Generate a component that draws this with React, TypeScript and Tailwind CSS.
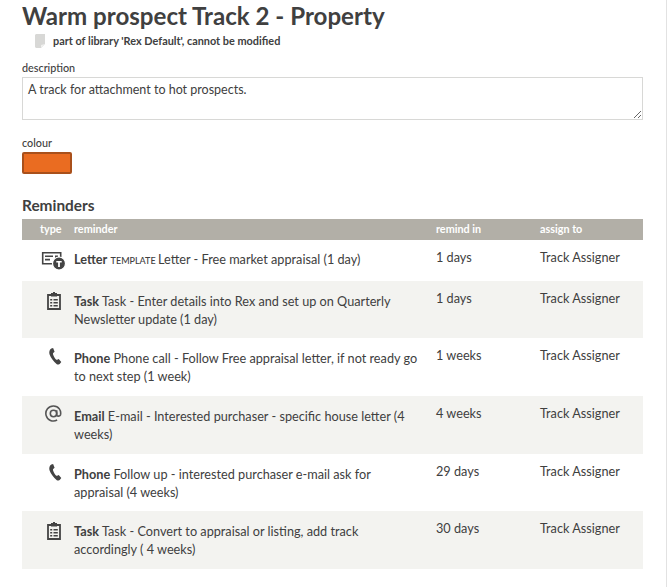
const rows = [
  { icon: "letter", type: "Letter", tpl: true, text: "Letter - Free market appraisal (1 day)", when: "1 days", h: "h-[41px]", pt: "pt-[10px]", alt: false },
  { icon: "task", type: "Task", text: "Task - Enter details into Rex and set up on Quarterly Newsletter update (1 day)", when: "1 days", h: "h-[57px]", pt: "pt-[11px]", alt: true },
  { icon: "phone", type: "Phone", text: "Phone call - Follow Free appraisal letter, if not ready go to next step (1 week)", when: "1 weeks", h: "h-[58px]", pt: "pt-[11px]", alt: false },
  { icon: "email", type: "Email", text: "E-mail - Interested purchaser - specific house letter (4 weeks)", when: "4 weeks", h: "h-[58px]", pt: "pt-[11px]", alt: true },
  { icon: "phone", type: "Phone", text: "Follow up - interested purchaser e-mail ask for appraisal (4 weeks)", when: "29 days", h: "h-[57px]", pt: "pt-[11px]", alt: false },
  { icon: "task", type: "Task", text: "Task - Convert to appraisal or listing, add track accordingly ( 4 weeks)", when: "30 days", h: "h-[58px]", pt: "pt-[11px]", alt: true },
];

function Icon({ name }: { name: string }) {
  if (name === "letter")
    return (
      <svg width="26" height="20" viewBox="0 0 26 20" className="mt-[11px] ml-[19px]">
        <path d="M1.700 1.700h18v11h-18z" fill="none" stroke="#444" strokeWidth="1.600" />
        <path d="M4 4.500h8v1.600H4zM4 7.800h5v1.600H4zM14 4.500h3v3h-3z" fill="#444" />
        <circle cx="18" cy="12.500" r="6.500" fill="#444" stroke="#fff" strokeWidth="1.200" />
        <path d="M15.300 9.900h5.400v1.700h-1.800v4.400h-1.800v-4.400h-1.800z" fill="#fff" />
      </svg>
    );
  if (name === "task")
    return (
      <svg width="14" height="18" viewBox="0 0 14 18" className="mt-[11px] ml-[25px]">
        <path d="M1 3h12v14H1z" fill="none" stroke="#444" strokeWidth="1.800" />
        <path d="M4 1h2V0h2v1h2v3.400H4z" fill="#444" />
        <path d="M3.200 7h2v1.600h-2zM6.500 7h4.300v1.600H6.500zM3.200 10h2v1.600h-2zM6.500 10h4.300v1.600H6.500zM3.200 13h2v1.600h-2zM6.500 13h4.300v1.600H6.500z" fill="#444" />
      </svg>
    );
  if (name === "phone")
    return (
      <svg width="14" height="17" viewBox="0 0 14 17" className="mt-[10px] ml-[26px]">
        <path d="M3.300.4 5.100 0l1.500 3.700-1.400 1.300c-.3.4-.3.8-.1 1.400.7 2 1.600 3.600 2.900 5 .4.4.8.5 1.200.3l1.500-.8 2.600 3-1.200 1.600c-.7.9-2.100 1.500-3.300.7C5.500 13.600 2.800 9.800 1.500 6.200.9 4.300 1.400 1.500 3.300.4z" fill="#444" />
      </svg>
    );
  return (
    <svg width="17" height="17" viewBox="0 0 17 17" className="mt-[9px] ml-[23px]">
      <circle cx="8.500" cy="8.500" r="3.200" fill="none" stroke="#555" strokeWidth="1.600" />
      <path d="M11.700 5.300v4.700c0 1.300 2.900 1.800 3.800-.2.900-4-1.700-8.800-7-8.800a7.500 7.500 0 1 0 3.600 14" fill="none" stroke="#555" strokeWidth="1.600" />
    </svg>
  );
}

export default function App() {
  return (
    <div className="h-[587px] w-[667px] overflow-hidden bg-white border-r border-[#e2e2e2] pl-[22px] pr-[23px] text-[#404040] font-['Lato','Liberation_Sans',sans-serif]">
      <h1 className="text-[24.100px] leading-[31px] font-bold whitespace-nowrap">
        Warm prospect Track 2 - Property
      </h1>
      <div className="mt-[2px] flex h-[16px] items-center pl-[13px] text-[10.900px] font-bold">
        <svg width="10" height="14" viewBox="0 0 10 14" className="mr-[8px]">
          <path d="M0 1 1 0h9v10l-4 4H1l-1-1z" fill="#d8d8d6" />
          <path d="M6 14v-3l4-1z" fill="#f0f0ee" />
        </svg>
        part of library 'Rex Default', cannot be modified
      </div>
      <div className="mt-[12px] text-[10.800px] leading-[14px] font-medium">description</div>
      <textarea
        readOnly
        defaultValue="A track for attachment to hot prospects."
        className="mt-[2px] block h-[43px] w-full border border-[#d8d8d6] px-[5px] pt-[3px] pb-[1px] text-[12.500px] leading-[18px] text-[#404040] outline-none"
      />
      <div className="mt-[16px] text-[10.800px] leading-[14px] font-medium">colour</div>
      <div className="mt-[2px] h-[22px] w-[50px] rounded-[2px] border-2 border-[#a9501b] bg-[#ea6c21]" />
      <h2 className="mt-[21px] text-[15.400px] leading-[20px] font-bold">Reminders</h2>
      <div className="mt-[4px] flex h-[21px] items-center bg-[#b2afa7] text-[10.800px] font-bold text-white">
        <div className="w-[52px] pl-[18px]">type</div>
        <div className="w-[362px]">reminder</div>
        <div className="w-[104px]">remind in</div>
        <div>assign to</div>
      </div>
      {rows.map((r, i) => (
        <div key={i} className={`flex ${r.h} text-[12.700px] leading-[18px] ${r.alt ? "bg-[#f3f3f0]" : "bg-white"}`}>
          <div className="w-[52px] shrink-0"><Icon name={r.icon} /></div>
          <div className={`w-[362px] shrink-0 ${r.pt} pr-[15px]`}>
            <span className="font-bold">{r.type}</span>{" "}
            {r.tpl && <span className="text-[9px] font-medium uppercase">template </span>}
            {r.text}
          </div>
          <div className="w-[104px] shrink-0 pt-[8px]">{r.when}</div>
          <div className="pt-[8px] whitespace-nowrap">Track Assigner</div>
        </div>
      ))}
    </div>
  );
}
